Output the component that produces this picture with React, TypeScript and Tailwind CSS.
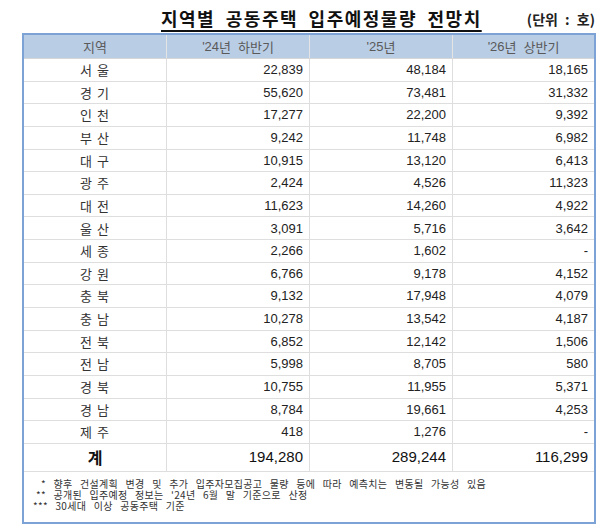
import React from "react";

const rows: [string, string, string, string][] = [
  ["서 울", "22,839", "48,184", "18,165"],
  ["경 기", "55,620", "73,481", "31,332"],
  ["인 천", "17,277", "22,200", "9,392"],
  ["부 산", "9,242", "11,748", "6,982"],
  ["대 구", "10,915", "13,120", "6,413"],
  ["광 주", "2,424", "4,526", "11,323"],
  ["대 전", "11,623", "14,260", "4,922"],
  ["울 산", "3,091", "5,716", "3,642"],
  ["세 종", "2,266", "1,602", "-"],
  ["강 원", "6,766", "9,178", "4,152"],
  ["충 북", "9,132", "17,948", "4,079"],
  ["충 남", "10,278", "13,542", "4,187"],
  ["전 북", "6,852", "12,142", "1,506"],
  ["전 남", "5,998", "8,705", "580"],
  ["경 북", "10,755", "11,955", "5,371"],
  ["경 남", "8,784", "19,661", "4,253"],
  ["제 주", "418", "1,276", "-"],
];

const kr = { fontFamily: '"Noto Sans CJK KR", "Noto Sans", sans-serif' };
const num = { fontFamily: '"Liberation Sans", Arial, sans-serif' };

export default function App() {
  return (
    <div className="w-[616px] h-[526px] bg-white text-[#333]" style={kr}>
      <div className="flex items-end h-[33px] pb-[4px]">
        <div
          className="ml-[161px] text-[18px] font-bold text-[#111] leading-[21px] underline decoration-2 underline-offset-[4px] tracking-[1.5px] [word-spacing:5px]"
        >
          지역별 공동주택 입주예정물량 전망치
        </div>
        <div className="ml-auto mr-[21px] text-[14px] font-bold text-[#222] leading-[20px] [word-spacing:4px]">
          (단위 : 호)
        </div>
      </div>
      <div className="ml-[22px] w-[574px] border-2 border-[#7da2d6]">
        <div className="grid grid-cols-[143px_143px_143px_141px] h-[24px] bg-[#b9cde5] text-[13px] text-[#5a5a5a] items-center text-center border-b border-[#d6d6d6]">
          <div className="h-full flex items-center justify-center border-r border-[#e4e4e4]">지역</div>
          <div className="h-full flex items-center justify-center border-r border-[#e4e4e4] [word-spacing:4px]">
            <span style={num}>'24</span>년 하반기
          </div>
          <div className="h-full flex items-center justify-center border-r border-[#e4e4e4]">
            <span style={num}>'25</span>년
          </div>
          <div className="h-full flex items-center justify-center [word-spacing:4px]">
            <span style={num}>'26</span>년 상반기
          </div>
        </div>
        {rows.map((r) => (
          <div
            key={r[0]}
            className="grid grid-cols-[143px_143px_143px_141px] h-[22.65px] border-b border-[#dedede] text-[13px] items-center"
          >
            <div className="h-full flex items-center justify-center border-r border-[#dedede] text-[#333] tracking-[1px]">
              {r[0]}
            </div>
            <div className="h-full flex items-center justify-end pr-[6px] border-r border-[#dedede] text-[#222]" style={num}>
              {r[1]}
            </div>
            <div className="h-full flex items-center justify-end pr-[6px] border-r border-[#dedede] text-[#222]" style={num}>
              {r[2]}
            </div>
            <div className="h-full flex items-center justify-end pr-[6px] text-[#222]" style={num}>
              {r[3]}
            </div>
          </div>
        ))}
        <div className="grid grid-cols-[143px_143px_143px_141px] h-[28px] border-b border-[#dedede] items-center">
          <div className="h-full flex items-center justify-center border-r border-[#dedede] text-[16px] font-bold text-[#111]">
            계
          </div>
          <div className="h-full flex items-center justify-end pr-[6px] border-r border-[#dedede] text-[15px] text-[#111]" style={num}>
            194,280
          </div>
          <div className="h-full flex items-center justify-end pr-[6px] border-r border-[#dedede] text-[15px] text-[#111]" style={num}>
            289,244
          </div>
          <div className="h-full flex items-center justify-end pr-[6px] text-[15px] text-[#111]" style={num}>
            116,299
          </div>
        </div>
        <div className="pt-[6px] pb-[11px] text-[10px] leading-[11px] text-[#333] tracking-[0.3px] [word-spacing:5px]">
          <div className="pl-[17px]">* 향후 건설계획 변경 및 추가 입주자모집공고 물량 등에 따라 예측치는 변동될 가능성 있음</div>
          <div className="pl-[12px]">** 공개된 입주예정 정보는 '24년 6월 말 기준으로 산정</div>
          <div className="pl-[9px]">*** 30세대 이상 공동주택 기준</div>
        </div>
      </div>
    </div>
  );
}
